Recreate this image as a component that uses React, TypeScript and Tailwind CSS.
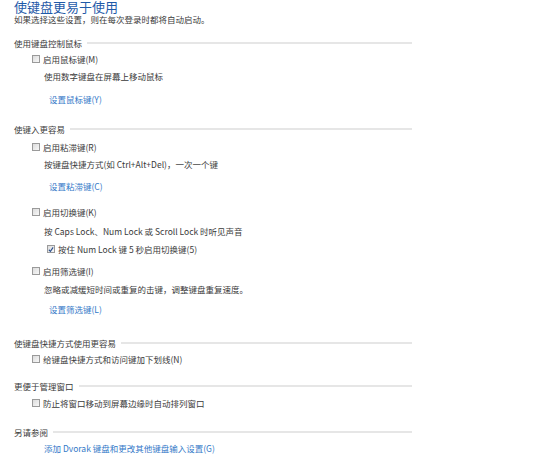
const font = { fontFamily: '"Noto Sans CJK SC", "Noto Sans", sans-serif' };
const tight = { fontFamily: '"Liberation Sans", "Noto Sans CJK SC", sans-serif' };

function Box({ checked = false }: { checked?: boolean }) {
  return (
    <span className="flex h-[8px] w-[8px] shrink-0 items-center justify-center border border-[#9a9a9a] bg-gradient-to-br from-[#dcdcdc] to-[#f8f8f8]">
      {checked && (
        <svg width="7" height="7" viewBox="0 0 7 7">
          <path d="M1 3.8 L2.8 5.6 L6 1" fill="none" stroke="#2a4f8f" strokeWidth="1.3" />
        </svg>
      )}
    </span>
  );
}

function Header({ text, mt }: { text: string; mt: string }) {
  return (
    <div className={`flex h-[12px] w-[398px] items-center gap-[5px] leading-[12px] ${mt}`}>
      <span className="shrink-0">{text}</span>
      <span className="h-[2px] flex-1 bg-[#e6e6e6]" />
    </div>
  );
}

function Check({ text, mt, indent = 'ml-[18px]', checked = false }: { text: string; mt: string; indent?: string; checked?: boolean }) {
  return (
    <div className={`flex h-[12px] items-center gap-[3px] leading-[12px] ${indent} ${mt}`}>
      <Box checked={checked} />
      <span>{text}</span>
    </div>
  );
}

export default function App() {
  return (
    <div className="h-[457px] w-[547px] overflow-hidden bg-white pl-[14px] text-[8.5px] text-[#3a3a3a]" style={font}>
      <div className="h-[15px] text-[13px] leading-[15px] text-[#1f5aa8]" style={tight}>使键盘更易于使用</div>
      <div className="mt-[0.5px] h-[9px] leading-[9px]" style={tight}>如果选择这些设置，则在每次登录时都将自动启动。</div>

      <Header text="使用键盘控制鼠标" mt="mt-[12.5px]" />
      <Check text="启用鼠标键(M)" mt="mt-[4px]" />
      <div className="ml-[30px] mt-[5px] h-[12px] leading-[12px]">使用数字键盘在屏幕上移动鼠标</div>
      <div className="ml-[35px] mt-[11px] h-[12px] leading-[12px] text-[#3379c8]">设置鼠标键(Y)</div>

      <Header text="使键入更容易" mt="mt-[18px]" />
      <Check text="启用粘滞键(R)" mt="mt-[6px]" />
      <div className="ml-[30px] mt-[5px] h-[12px] leading-[12px]">按键盘快捷方式(如 Ctrl+Alt+Del)，一次一个键</div>
      <div className="ml-[35px] mt-[10px] h-[12px] leading-[12px] text-[#3379c8]">设置粘滞键(C)</div>
      <Check text="启用切换键(K)" mt="mt-[14px]" />
      <div className="ml-[30px] mt-[7px] h-[12px] leading-[12px]">按 Caps Lock、Num Lock 或 Scroll Lock 时听见声音</div>
      <Check text="按住 Num Lock 键 5 秒启用切换键(5)" mt="mt-[6px]" indent="ml-[33px]" checked />
      <Check text="启用筛选键(I)" mt="mt-[10px]" />
      <div className="ml-[30px] mt-[6px] h-[12px] leading-[12px]">忽略或减缓短时间或重复的击键，调整键盘重复速度。</div>
      <div className="ml-[35px] mt-[8px] h-[12px] leading-[12px] text-[#3379c8]">设置筛选键(L)</div>

      <Header text="使键盘快捷方式使用更容易" mt="mt-[22px]" />
      <Check text="给键盘快捷方式和访问键加下划线(N)" mt="mt-[4px]" />

      <Header text="更便于管理窗口" mt="mt-[15px]" />
      <Check text="防止将窗口移动到屏幕边缘时自动排列窗口" mt="mt-[5px]" />

      <Header text="另请参阅" mt="mt-[17px]" />
      <div className="ml-[30px] mt-[4px] h-[12px] leading-[12px] text-[#3379c8]">添加 Dvorak 键盘和更改其他键盘输入设置(G)</div>
    </div>
  );
}
